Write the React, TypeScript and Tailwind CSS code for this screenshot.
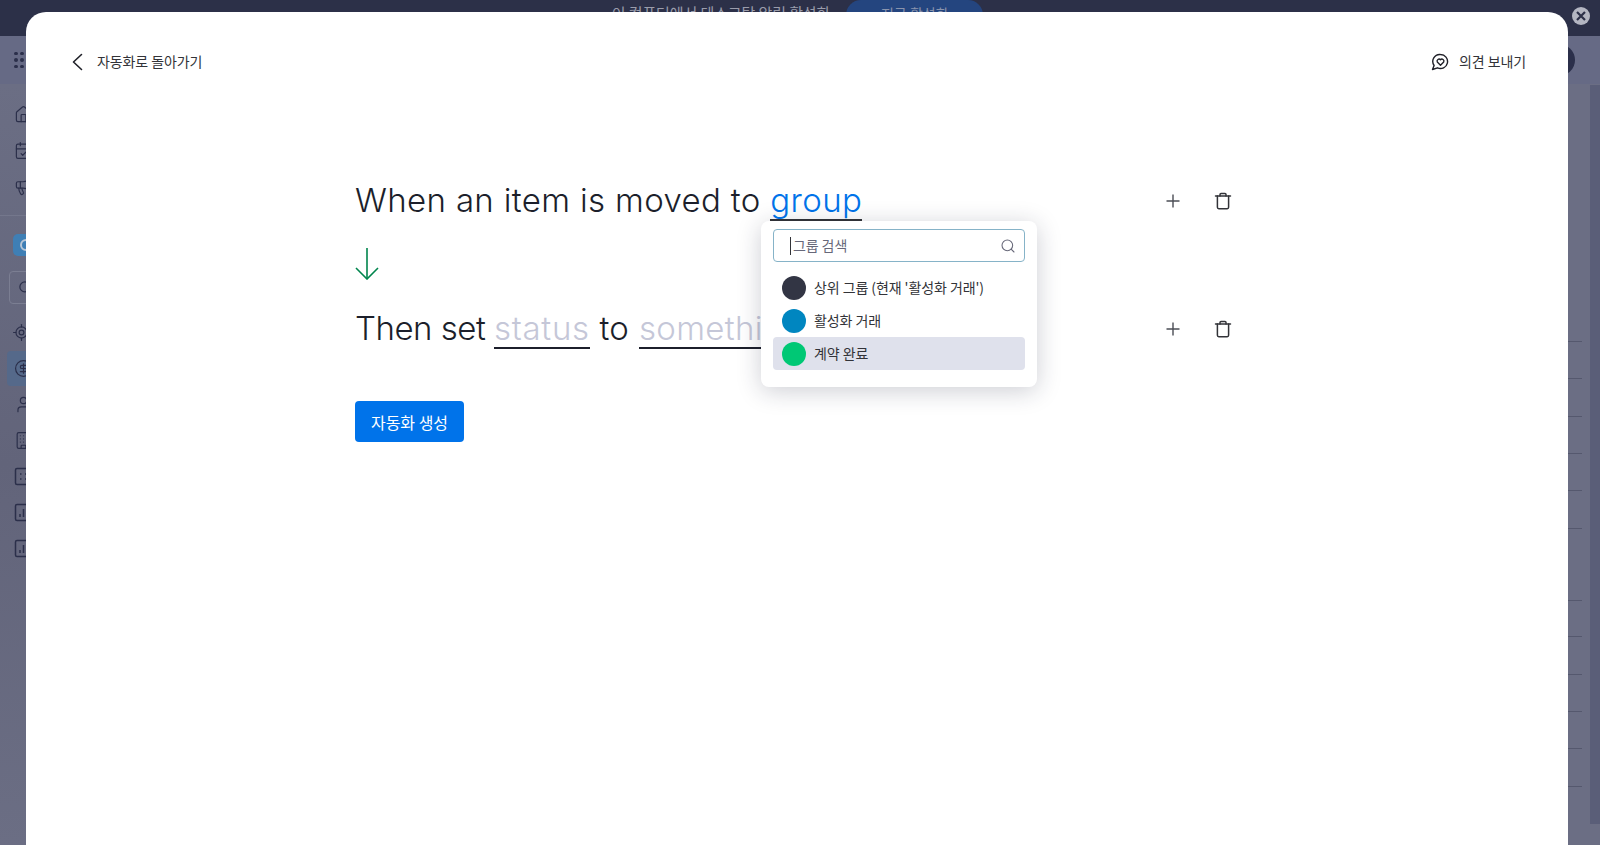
import { Home, CalendarCheck, Megaphone, Search, LocateFixed, CircleDollarSign, User, Building } from "lucide-react";

const KR = "font-['Noto_Sans_CJK_KR','Noto_Sans',sans-serif]";
const HEAD = "font-['Inter','Noto_Sans',sans-serif] font-light";

const GROUPS = [
  { name: "상위 그룹 (현재 '활성화 거래')", color: "bg-[#323544]", active: false },
  { name: "활성화 거래", color: "bg-[#0086c0]", active: false },
  { name: "계약 완료", color: "bg-[#00c875]", active: true },
];

const RULE_LINES = [341, 378, 416, 453, 490, 528, 600, 636, 674, 711, 748, 786];

function TrashIcon() {
  return (
    <svg width="20" height="20" viewBox="0 0 20 20" fill="none" stroke="#323338" strokeWidth="1.5" strokeLinejoin="round" strokeLinecap="round">
      <path d="M2.5 5h15" />
      <path d="M7 5V3.6c0-.6.4-1 1-1h4c.6 0 1 .4 1 1V5" />
      <path d="M4.4 5v11.3c0 .8.6 1.4 1.4 1.4h8.4c.8 0 1.4-.6 1.4-1.4V5" />
    </svg>
  );
}

function PlusIcon() {
  return (
    <svg width="14" height="14" viewBox="0 0 14 14" fill="none" stroke="#4b4d55" strokeWidth="1.4">
      <path d="M7 .5v13M.5 7h13" />
    </svg>
  );
}

function RowActions() {
  return (
    <div className="flex items-center gap-[33px]">
      <PlusIcon />
      <TrashIcon />
    </div>
  );
}

function DotsBoxIcon() {
  return (
    <svg width="19" height="19" viewBox="0 0 19 19" fill="none" stroke="#2b2f4a" strokeWidth="1.5">
      <rect x="1.5" y="1.5" width="16" height="16" rx="1.5" />
      <path d="M6 7h1.5M11 7h1.5M6 12h1.5M11 12h1.5" />
    </svg>
  );
}

function ChartBoxIcon() {
  return (
    <svg width="19" height="19" viewBox="0 0 19 19" fill="none" stroke="#2b2f4a" strokeWidth="1.5">
      <rect x="1.5" y="1.5" width="16" height="16" rx="1.5" />
      <path d="M6 14v-3M9.5 14V6M13 14V9" />
    </svg>
  );
}

function Sidebar() {
  const iconCls = "text-[#2b2f4a]";
  return (
    <div className="w-[26px] flex flex-col items-start pl-[14px] pt-[21px] bg-gradient-to-b from-[#6b6e84] via-[#62647a] to-[#6b6e84]">
      <div className="flex flex-col gap-[17px]">
        <Home size={19} strokeWidth={1.5} className={iconCls} />
        <CalendarCheck size={19} strokeWidth={1.5} className={iconCls} />
        <Megaphone size={19} strokeWidth={1.5} className={iconCls} />
      </div>
      <div className="w-[40px] -ml-[14px] mt-[19px] h-px bg-[#74778c] shrink-0" />
      <div className="w-[24px] h-[22px] -ml-[1px] mt-[18px] rounded-[5px] bg-[#3f7fb5] shrink-0 flex items-center pl-[7px]">
        <span className="w-[12px] h-[12px] rounded-full border-2 border-[#b9c6d6] shrink-0" />
      </div>
      <div className="w-[30px] h-[33px] -ml-[5px] mt-[15px] rounded border border-[#7b7e92] flex items-center pl-[8px] shrink-0">
        <Search size={15} className={iconCls} />
      </div>
      <div className="flex flex-col mt-[19px] gap-[17px]">
        <LocateFixed size={19} strokeWidth={1.5} className={`${iconCls} -ml-[2px]`} />
        <div className="-ml-[7px] -my-[8px] w-[30px] h-[35px] rounded bg-[#55698a] flex items-center pl-[7px]">
          <CircleDollarSign size={19} strokeWidth={1.5} className={iconCls} />
        </div>
        <User size={19} strokeWidth={1.5} className={iconCls} />
        <Building size={19} strokeWidth={1.5} className={iconCls} />
        <DotsBoxIcon />
        <ChartBoxIcon />
        <ChartBoxIcon />
      </div>
    </div>
  );
}

function Backdrop() {
  return (
    <div className={`h-[845px] w-[1600px] overflow-hidden bg-[#6b6e84] flex flex-col ${KR}`}>
      <div className="h-[36px] shrink-0 bg-[#2c3048] flex items-start justify-center gap-[16px] pr-[5px] relative">
        <span className="text-[15px] tracking-[-0.1px] leading-[26px] text-[#9a9cab]">이 컴퓨터에서 데스크탑 알림 활성화</span>
        <div className="h-[30px] w-[137px] rounded-full bg-[#24457f] text-center text-[14px] leading-[26px] text-[#8a94ad]">지금 활성화</div>
        <div className="absolute left-[1572px] top-[7px] w-[18px] h-[18px] rounded-full bg-[#b4b6c2] flex items-center justify-center">
          <svg width="10" height="10" viewBox="0 0 10 10" stroke="#2c3048" strokeWidth="2.2">
            <path d="M1 1l8 8M9 1l-8 8" />
          </svg>
        </div>
      </div>
      <div className="h-[48px] shrink-0 bg-[#666a85] flex items-center pl-[14px] justify-between">
        <div className="grid grid-cols-3 gap-[3px] w-[16px]">
          {Array.from({ length: 9 }).map((_, i) => (
            <span key={i} className="w-[3.5px] h-[3.5px] rounded-full bg-[#2b2f4a]" />
          ))}
        </div>
        <div className="w-[32px] h-[32px] rounded-full bg-[#2b2f4a] mr-[25px]" />
      </div>
      <div className="flex-1 flex">
        <Sidebar />
      </div>
    </div>
  );
}

function GroupDropdown() {
  return (
    <div className="absolute left-[735px] top-[209px] w-[276px] h-[166px] rounded-lg bg-white shadow-[0_4px_24px_rgba(29,32,60,0.22)] px-[12px] pt-[8px]">
      <div className="h-[33px] rounded border border-[#86b3c8] flex items-center pl-[16px] pr-[8px]">
        <span className="w-px h-[18px] bg-[#323338]" />
        <span className="text-[14px] tracking-[-0.1px] text-[#676879] ml-[2px]">그룹 검색</span>
        <Search size={16} strokeWidth={1.6} className="ml-auto text-[#676879]" />
      </div>
      <div className="mt-[9px] flex flex-col">
        {GROUPS.map((g) => (
          <div
            key={g.name}
            className={`h-[33px] flex items-center pl-[9px] gap-[8px] rounded ${g.active ? "bg-[#dfe1ec]" : ""}`}
          >
            <span className={`w-[24px] h-[24px] rounded-full shrink-0 ${g.color}`} />
            <span className="text-[14px] tracking-[-0.08px] text-[#323338]">{g.name}</span>
          </div>
        ))}
      </div>
    </div>
  );
}

export default function App() {
  return (
    <div className="relative h-[845px] w-[1600px] overflow-hidden">
      <Backdrop />
      {/* right edge of the board peeking out behind the modal */}
      <div className="absolute left-[1590px] top-[85px] w-[10px] h-[739px] bg-[#5a5e78]" />
      {RULE_LINES.map((y) => (
        <div key={y} className="absolute left-[1568px] w-[14px] h-px bg-[#55586e]" style={{ top: y }} />
      ))}

      <div className={`absolute left-[26px] top-[12px] w-[1542px] h-[833px] rounded-t-[20px] bg-white ${KR}`}>
        <div className="flex items-center justify-between pl-[44px] pr-[42px] pt-[39px]">
          <div className="flex items-center gap-[13px] text-[14px] tracking-[-0.1px] text-[#323338]">
            <svg width="14" height="18" viewBox="0 0 14 18" fill="none" stroke="#1f2028" strokeWidth="1.6" strokeLinecap="round" strokeLinejoin="round">
              <path d="M11.5 1.5L3.5 9l8 7.5" />
            </svg>
            <span>자동화로 돌아가기</span>
          </div>
          <div className="flex items-center gap-[10px] text-[14px] tracking-[-0.1px] text-[#323338]">
            <svg width="18" height="18" viewBox="0 0 18 18" fill="none" stroke="#1f2028" strokeWidth="1.4" strokeLinejoin="round">
              <path d="M9.5 1.5a7 7 0 1 1-3 13.3L1.5 16.5l1.6-4a7 7 0 0 1 6.4-11z" />
              <path d="M9.5 12.2L6.3 9a2 2 0 0 1 3.2-2.3A2 2 0 0 1 12.7 9z" />
            </svg>
            <span>의견 보내기</span>
          </div>
        </div>

        <div className="pl-[329px] pr-[335px] pt-[109px]">
          <div className="flex items-center justify-between">
            <div className={`${HEAD} text-[33px] leading-[38px] text-[#1c1f2b] tracking-[0.35px] whitespace-pre`}>
              <span>When an item is moved to </span>
              <span className="inline-block border-b-2 border-[#323338] text-[#0073ea]">group</span>
            </div>
            <RowActions />
          </div>

          <svg width="24" height="32" viewBox="0 0 24 32" fill="none" stroke="#00854d" strokeWidth="1.6" className="mt-[27px]">
            <path d="M12 0v31" />
            <path d="M1 20l11 11 11-11" />
          </svg>

          <div className="flex items-center justify-between mt-[29px]">
            <div className={`${HEAD} text-[33px] leading-[38px] text-[#1c1f2b] tracking-[0.35px] whitespace-pre`}>
              <span className="tracking-[-0.5px]">Then set </span>
              <span className="inline-block border-b-2 border-[#1c1f2b] text-[#c5c7d8] tracking-[0.7px]">status</span>
              <span> to </span>
              <span className="inline-block border-b-2 border-[#1c1f2b] text-[#c5c7d8]">something</span>
            </div>
            <RowActions />
          </div>

          <button className="mt-[52px] w-[109px] h-[41px] rounded bg-[#0073ea] text-white text-[16px]">자동화 생성</button>
        </div>

        <GroupDropdown />
      </div>
    </div>
  );
}
